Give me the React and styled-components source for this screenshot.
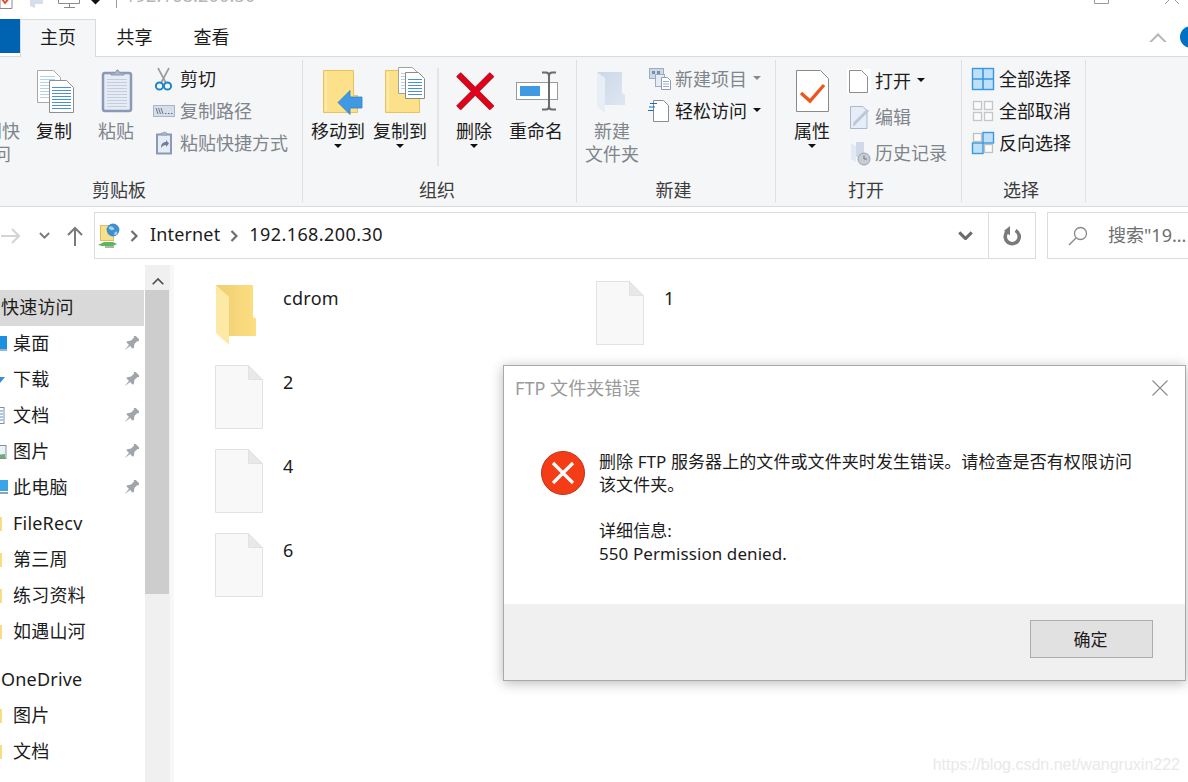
import React from 'react';
import styled, { createGlobalStyle } from 'styled-components';

const Global = createGlobalStyle`
  html, body { margin: 0; padding: 0; background: #fff; }
  body { font-family: "Noto Sans", "Noto Sans CJK SC", sans-serif; color: #1c1c1c; }
  * { box-sizing: border-box; }
`;

const Page = styled.div`
  position: relative; width: 1188px; height: 782px; overflow: hidden; background: #fff;
  font-size: 18px; line-height: 23px;
`;

/* ---------- title bar ---------- */
const TitleBar = styled.div`
  height: 19px; display: flex; align-items: flex-start; overflow: hidden; position: relative;
`;
const TitleText = styled.div`
  margin-left: 8px; margin-top: -16px; color: #b5b5b5; font-size: 18px; letter-spacing: 0.2px;
`;
const QuickSep = styled.div`
  width: 1px; height: 8px; background: #9a9a9a;
`;
const TitleSpacer = styled.div` flex: 1; `;

/* ---------- tabs ---------- */
const TabBar = styled.div`
  height: 38px; display: flex; align-items: stretch; border-bottom: 1px solid #dadbdc; background: #fff;
`;
const FileTab = styled.div`
  width: 20px; height: 34px; background: #0063b1;
`;
const Tab = styled.div`
  width: ${p => p.$w}px; display: flex; align-items: center; justify-content: center; height: 38px; padding-bottom: 2px;
  background: ${p => (p.$active ? '#f5f6f7' : 'transparent')};
  border: 1px solid ${p => (p.$active ? '#dadbdc' : 'transparent')};
  border-bottom: none;
`;
const TabSpacer = styled.div` flex: 1; `;
const Collapse = styled.div`
  width: 30px; display: flex; align-items: center; justify-content: center;
`;
const Help = styled.div`
  width: 22px; height: 22px; border-radius: 50%; background: #0072c6; margin: 7px -14px 0 7px; flex: none;
`;

/* ---------- ribbon ---------- */
const Ribbon = styled.div`
  height: 150px; background: #f5f6f7; border-bottom: 1px solid #dadbdc; padding-top: 3px; display: flex;
`;
const Group = styled.div`
  width: ${p => p.$w}px; height: 142px; flex: none; display: flex; flex-direction: column;
  margin-left: ${p => p.$ml || 0}px; border-right: 1px solid #dfe0e1;
`;
const GroupBody = styled.div`
  flex: 1; display: flex; align-items: flex-start; padding: 3px 0 0 ${p => p.$pl || 0}px; min-height: 0;
`;
const GroupLabel = styled.div`
  height: 24px; padding-right: ${p => p.$pr ?? 5}px; display: flex; align-items: center; justify-content: center; color: #3c3c3c;
`;
const BigButton = styled.div`
  width: ${p => p.$w || 62}px; flex: none; display: flex; flex-direction: column; align-items: center;
  padding-top: 3px; margin-left: ${p => p.$ml || 0}px;
  color: ${p => (p.$muted ? '#7f858b' : 'inherit')}; white-space: nowrap;
`;
const BigIcon = styled.div` width: 48px; height: 48px; `;
const BigLabel = styled.div` margin-top: 6px; text-align: center; white-space: pre-line; `;
const DropCaret = styled.div`
  width: 0; height: 0; margin-top: 1px;
  border-left: 4px solid transparent; border-right: 4px solid transparent; border-top: 4px solid #111;
`;
const InlineCaret = styled.div`
  width: 0; height: 0; margin-left: 6px; margin-bottom: 3px;
  border-left: 4px solid transparent; border-right: 4px solid transparent;
  border-top: 4px solid ${p => (p.$muted ? '#8a8a8a' : '#111')};
`;
const GroupDivider = styled.div`
  width: 2px; height: 98px; background: #e4e5e6; margin: 5px 4px 0 6px; flex: none;
`;
const SmallColumn = styled.div`
  display: flex; flex-direction: column; margin-left: ${p => p.$ml || 0}px;
`;
const SmallRow = styled.div`
  height: ${p => p.$h || 32}px; display: flex; align-items: center; white-space: nowrap;
  color: ${p => (p.$muted ? '#7f858b' : 'inherit')};
`;
const SmallIcon = styled.div`
  width: 24px; height: 24px; margin-right: 4px; flex: none;
`;

/* ---------- address row ---------- */
const AddressRow = styled.div`
  height: 58px; display: flex; align-items: flex-start; padding-top: 5px; background: #fff;
`;
const NavCluster = styled.div`
  width: 94px; height: 47px; flex: none; display: flex; align-items: center;
`;
const NavSlot = styled.div` margin-left: ${p => p.$ml || 0}px; `;
const AddressBox = styled.div`
  width: 942px; height: 47px; flex: none; border: 1.5px solid #dcdcdc; display: flex; align-items: center;
  padding-left: 2px;
`;
const Crumb = styled.div`
  margin-left: ${p => p.$ml || 0}px; margin-top: -2px; white-space: nowrap; letter-spacing: ${p => p.$ls}px;
`;
const CrumbFill = styled.div` flex: 1; `;
const DropZone = styled.div` width: 45px; display: flex; justify-content: center; `;
const Refresh = styled.div`
  width: 47px; height: 100%; border-left: 1.5px solid #dcdcdc; display: flex; align-items: center; justify-content: center;
`;
const SearchBox = styled.div`
  width: 160px; height: 47px; flex: none; margin-left: 11px; border: 1.5px solid #dcdcdc;
  display: flex; align-items: center; padding-left: 20px; color: #6f6f6f; white-space: nowrap;
`;
const SearchText = styled.div` margin-left: 20px; `;

/* ---------- main ---------- */
const Main = styled.div`
  height: 517px; display: flex;
`;
const Sidebar = styled.div`
  width: 145px; flex: none; padding-top: 25px;
`;
const NavItem = styled.div`
  height: 36px; display: flex; align-items: center; padding-right: 6px; margin-top: ${p => p.$mt || 0}px;
  background: ${p => (p.$active ? '#d9d9d9' : 'transparent')};
  padding-left: ${p => (p.$flat ? 1 : 0)}px; width: ${p => (p.$active ? 144 : 145)}px;
`;
const NavGlyph = styled.div` width: 13px; height: 18px; flex: none; `;
const NavLabel = styled.div` flex: 1; white-space: nowrap; padding-bottom: 2px; letter-spacing: 0.2px; `;
const ScrollTrack = styled.div`
  width: 29px; flex: none; background: #f0f0f0; border-right: 4px solid #f8f8f8; display: flex; flex-direction: column;
`;
const ScrollButton = styled.div`
  height: 25px; display: flex; align-items: flex-end; justify-content: center; padding-bottom: 5px; background: #f0f0f0;
`;
const ScrollThumb = styled.div` height: 304px; background: #cdcdcd; margin-right: 1px; `;
const FileArea = styled.div`
  flex: 1; padding: 16px 0 0 41px; display: grid; grid-template-columns: 381px 381px; grid-auto-rows: 84px; align-content: start;
`;
const FileItem = styled.div`
  display: flex; align-items: flex-start; grid-column: ${p => p.$col}; letter-spacing: 0.3px;
`;
const FileName = styled.div` margin-left: 20px; line-height: 34px; `;

/* ---------- dialog ---------- */
const Dialog = styled.div`
  position: absolute; left: 503px; top: 365px; width: 683px; height: 316px; background: #fff;
  border: 1px solid #a9a9a9; box-shadow: 0 2px 12px rgba(0,0,0,.28); display: flex; flex-direction: column;
  font-size: 17px;
`;
const DialogTitle = styled.div`
  height: 44px; flex: none; display: flex; align-items: center; justify-content: space-between;
  padding: 0 17px 0 11px; color: #9a9a9a; font-size: 18px; letter-spacing: 0.05px;
`;
const DialogBody = styled.div`
  flex: 1; display: flex; align-items: flex-start; padding: 40px 0 0 37px;
`;
const ErrorIcon = styled.div` width: 44px; height: 44px; margin-top: 1px; flex: none; `;
const Message = styled.div` margin-left: 14px; white-space: pre-line; letter-spacing: 0.08px; `;
const DialogFooter = styled.div`
  height: 76px; flex: none; background: #f0f0f0; display: flex; justify-content: flex-end; padding: 16px 32px 0 0;
`;
const OkButton = styled.div`
  width: 123px; height: 38px; background: #e1e1e1; border: 1px solid #adadad; display: flex; align-items: center; justify-content: center;
  padding-right: 2px;
`;
const Watermark = styled.div`
  position: absolute; right: 8px; top: 753px; font-family: "Liberation Sans", sans-serif; font-size: 16px;
  color: #e9e9e9; white-space: nowrap;
`;

/* ---------- icons ---------- */
const Page2 = ({ x, y, w, h, ear = 7, stroke = '#9a9a9a', fill = '#fff' }) => (
  <path d={`M${x} ${y}H${x + w - ear}L${x + w} ${y + ear}V${y + h}H${x}Z`} fill={fill} stroke={stroke} />
);
const Lines = ({ x, y, w, n, gap = 3, color = '#4a90d9' }) => (
  <g stroke={color} strokeWidth="1">
    {Array.from({ length: n }).map((_, i) => <path key={i} d={`M${x} ${y + i * gap + .5}h${w}`} />)}
  </g>
);
const Ico = ({ s = 48, h, children, ...r }) => (
  <svg width={s} height={h || s} viewBox={`0 0 ${s} ${h || s}`} style={{ display: 'block', overflow: 'visible' }} {...r}>{children}</svg>
);

const CopyIcon = () => (
  <Ico>
    <Page2 x={7.5} y={4.5} w={23} h={32} ear={7} stroke="#a9a9a9" />
    <Lines x={10} y={10} w={15} n={8} color="#b7cfe9" />
    <Page2 x={19.5} y={14.5} w={24} h={32} ear={7} stroke="#8f8f8f" />
    <Lines x={22} y={21} w={19} n={8} color="#4a90d9" />
  </Ico>
);
const PasteIcon = () => (
  <Ico>
    <rect x="11" y="7" width="28" height="38" rx="2" fill="#e6ebf4" stroke="#8a9ab6" strokeWidth="2.5" />
    <Lines x={15} y={13} w={20} n={10} gap={3} color="#c3cde0" />
    <path d="M19 9v-2h4l2-3h1l2 3h4v2z" fill="#a9b6cc" stroke="#8a9ab6" />
  </Ico>
);
const FolderBase = () => (
  <>
    <path d="M9.5 4.5H39.5V29.5H43.5V46.5H9.5Z" fill="#fde08a" stroke="#e6c35c" />
    <path d="M12 6V45" stroke="#ffeeb5" strokeWidth="1.5" />
  </>
);
const MoveIcon = () => (
  <Ico>
    <FolderBase />
    <path d="M24 36.5L36 24.5V31H48V42H36V48.5Z" fill="#3f9ae3" stroke="#2f7dbf" strokeWidth=".8" />
  </Ico>
);
const CopyToIcon = () => (
  <Ico>
    <FolderBase />
    <Page2 x={22.5} y={1.5} w={20} h={26} ear={6} stroke="#a3a3a3" />
    <Lines x={25} y={7} w={13} n={6} color="#b7cfe9" />
    <Page2 x={29.5} y={6.5} w={19} h={26} ear={6} stroke="#8b8b8b" />
    <Lines x={32} y={13} w={14} n={6} color="#4a90d9" />
  </Ico>
);
const DeleteIcon = () => (
  <Ico>
    <path d="M8.5 8.5L42 42M42 8.5L8.5 42" stroke="#9c2430" strokeWidth="6.6" />
    <path d="M8.5 8.5L42 42M42 8.5L8.5 42" stroke="#e2001a" strokeWidth="5" />
  </Ico>
);
const RenameIcon = () => (
  <Ico>
    <rect x="4.5" y="16.5" width="41" height="17" fill="#fff" stroke="#9a9a9a" />
    <rect x="8" y="20" width="20" height="10" fill="#3f9ae3" />
    <path d="M30 6.5H34C36 6.5 37 8 37 10V40C37 42 36 43.5 34 43.5H30M44 6.5H40C38 6.5 37 8 37 10M44 43.5H40C38 43.5 37 42 37 40" fill="none" stroke="#6b6b6b" strokeWidth="2" />
  </Ico>
);
const NewFolderIcon = () => (
  <Ico>
    <defs>
      <linearGradient id="nfb" x1="0" x2="1" y1="0" y2="1">
        <stop offset="0" stopColor="#cbd7e8" /><stop offset="1" stopColor="#dfe6f1" />
      </linearGradient>
    </defs>
    <path d="M9 6H34V27L37 29V39H17Z" fill="url(#nfb)" />
    <path d="M9 6L17 12V47L9 41Z" fill="#e8eef6" />
  </Ico>
);
const PropsIcon = () => (
  <Ico>
    <Page2 x={8.5} y={4.5} w={32} h={41} ear={8} stroke="#8a8a8a" />
    <path d="M13 27L22 35L36 19" fill="none" stroke="#e9591f" strokeWidth="3.4" />
  </Ico>
);

const Scissors = () => (
  <Ico s={24}>
    <path d="M6 1L14 16M17 1L9 16" stroke="#9b9b9b" strokeWidth="1.6" fill="none" />
    <circle cx="7.5" cy="19" r="3.6" fill="none" stroke="#1b87c9" strokeWidth="2" />
    <circle cx="15.5" cy="19" r="3.6" fill="none" stroke="#1b87c9" strokeWidth="2" />
  </Ico>
);
const CopyPath = () => (
  <Ico s={24}>
    <rect x="1.5" y="6.5" width="21" height="11" fill="#d6deea" stroke="#aab6c8" />
    <path d="M4 9l2 6M6.5 9l2 6M9 9l2 6" stroke="#5c6b80" strokeWidth=".9" />
    <path d="M13 14.5h1.4M16 14.5h1.4M19 14.5h1.4" stroke="#5c6b80" />
  </Ico>
);
const PasteShortcut = () => (
  <Ico s={24}>
    <rect x="5" y="3.5" width="14" height="19" fill="#e6ebf4" stroke="#8a9ab6" strokeWidth="2" />
    <path d="M9 4V2h2l1-1h1l1 1h1v2z" fill="#a9b6cc" stroke="#8a9ab6" strokeWidth=".7" />
    <path d="M9 17c0-4 2-6 5-6v-2l3 3.5-3 3.5v-2c-2 0-4 1-5 3z" fill="#6f7f96" />
  </Ico>
);
const NewItem = () => (
  <Ico s={24}>
    <rect x="2.5" y="1.5" width="14" height="10" fill="#cdd8e7" stroke="#9cadc3" />
    <rect x="5" y="4" width="3" height="3" fill="#7d8fa8" /><rect x="10" y="4" width="3" height="3" fill="#7d8fa8" />
    <rect x="8.5" y="7.5" width="9" height="12" fill="#e6ecf5" stroke="#9cadc3" />
    <Page2 x={14.5} y={10.5} w={9} h={12} ear={3} stroke="#8c9db5" />
    <Lines x={16} y={14} w={6} n={3} gap={2.5} color="#9cadc3" />
  </Ico>
);
const EasyAccess = () => (
  <Ico s={24}>
    <Page2 x={6.5} y={1.5} w={15} h={21} ear={5} stroke="#8d8d8d" />
    <path d="M3 4.5h7M2 8h6M1 11.5h6" stroke="#1173c4" strokeWidth="1.2" />
  </Ico>
);
const OpenIcon = () => (
  <Ico s={24}>
    <rect x="0" y="0" width="24" height="24" fill="#fff" />
    <Page2 x={2.5} y={1.5} w={18} h={22} ear={6} stroke="#8d8d8d" fill="#fff" />
  </Ico>
);
const EditIcon = () => (
  <Ico s={24}>
    <path d="M3.5 1.5H16L20 6V23.5H3.5Z" fill="#e6edf7" stroke="#aab9d0" />
    <path d="M7 19L21 5" stroke="#bcc8da" strokeWidth="3" />
    <path d="M7 19l-1 2 2-1z" fill="#8f9db3" />
  </Ico>
);
const HistoryIcon = () => (
  <Ico s={24}>
    <path d="M4 2L9 5V21L4 18Z" fill="#e3e9f2" />
    <path d="M9 1H17V16H9Z" fill="#cfd9e8" />
    <circle cx="17" cy="18" r="6" fill="#c6ccd4" stroke="#9aa2ac" />
    <path d="M17 14.5V18H20" stroke="#6d7580" fill="none" />
  </Ico>
);
const SelectAll = () => (
  <Ico s={24}>
    <rect x="1.5" y="1.5" width="21" height="21" fill="#bfe0fa" stroke="#3b97de" strokeWidth="1.4" />
    <path d="M12 1v22M1 12h22" stroke="#3b97de" strokeWidth="1.6" />
  </Ico>
);
const SelectNone = () => (
  <Ico s={24}>
    <g fill="#fafafa" stroke="#c6c6c6" strokeWidth="1.3">
      <rect x="2.5" y="2.5" width="8" height="8" /><rect x="13.5" y="2.5" width="8" height="8" />
      <rect x="2.5" y="13.5" width="8" height="8" /><rect x="13.5" y="13.5" width="8" height="8" />
    </g>
  </Ico>
);
const SelectInvert = () => (
  <Ico s={24}>
    <g fill="#fafafa" stroke="#c0c0c0" strokeWidth="1.3">
      <rect x="2.5" y="2.5" width="8" height="8" /><rect x="13.5" y="13.5" width="8" height="8" />
    </g>
    <g fill="#bfe0fa" stroke="#3b97de" strokeWidth="1.4">
      <rect x="12" y="1.5" width="10.5" height="10.5" /><rect x="1.5" y="12" width="10.5" height="10.5" />
    </g>
  </Ico>
);

const Arrow = ({ color, w = 20 }) => (
  <svg width={w} height="18" viewBox={`0 0 ${w} 18`} style={{ display: 'block' }}>
    <path d={`M1 9H${w - 1}M${w - 8} 2L${w - 1} 9L${w - 8} 16`} fill="none" stroke={color} strokeWidth="2" />
  </svg>
);
const UpArrow = () => (
  <svg width="18" height="20" viewBox="0 0 18 20" style={{ display: 'block' }}>
    <path d="M9 20V2M2 9L9 2L16 9" fill="none" stroke="#7a7a7a" strokeWidth="2" />
  </svg>
);
const ChevDown = ({ w = 12, color = '#6b6b6b', sw = 2.4 }) => (
  <svg width={w} height={w * .6} viewBox="0 0 12 7" style={{ display: 'block' }}>
    <path d="M1 1L6 6L11 1" fill="none" stroke={color} strokeWidth={sw} />
  </svg>
);
const ChevRight = ({ ml }) => (
  <svg width="8" height="12" viewBox="0 0 8 12" style={{ display: 'block', marginLeft: ml }}>
    <path d="M1.5 1L6.5 6L1.5 11" fill="none" stroke="#6e6e6e" strokeWidth="2.2" />
  </svg>
);
const NetFolder = () => (
  <svg width="24" height="26" viewBox="0 0 24 26" style={{ display: 'block', flex: 'none' }}>
    <rect x="3.5" y="2.5" width="13" height="15" fill="#fbe08c" stroke="#d9bd62" />
    <path d="M1 22l6-3h9l4 2-4 2H5z" fill="#5cb85c" />
    <path d="M8 24h9" stroke="#aeb4ae" strokeWidth="2" />
    <circle cx="16" cy="7" r="6.4" fill="#3f8fcf" />
    <path d="M12 4c2-2 4 0 5 1s-1 3-3 2-3-2-2-3zM18 9c2-1 3 0 2 2s-3 1-3 0z" fill="#9fd0ef" />
  </svg>
);
const RefreshIcon = () => (
  <svg width="18" height="20" viewBox="0 0 18 20" style={{ display: 'block' }}>
    <path d="M12.5 4.5A7 7 0 1 1 4 6" fill="none" stroke="#7a7a7a" strokeWidth="3.6" />
    <path d="M7 0V9.5L1 4.8Z" fill="#7a7a7a" />
  </svg>
);
const SearchIcon = () => (
  <svg width="20" height="20" viewBox="0 0 20 20" style={{ display: 'block' }}>
    <circle cx="12.5" cy="7.5" r="6" fill="none" stroke="#8a8a8a" strokeWidth="1.3" />
    <path d="M8 12L1 19" stroke="#8a8a8a" strokeWidth="1.5" />
  </svg>
);
const UpChevron = ({ w = 18, color = '#b5b5b5', sw = 2 }) => (
  <svg width={w} height={w * .55} viewBox="0 0 18 10" style={{ display: 'block' }}>
    <path d="M1 9.5L9 1.5L17 9.5" fill="none" stroke={color} strokeWidth={sw} />
  </svg>
);
const PinIcon = () => (
  <svg width="16" height="16" viewBox="0 0 16 16" style={{ display: 'block', flex: 'none' }}>
    <g transform="rotate(45 8 8) translate(0 -1)" fill="#9fa5aa">
      <path d="M4.5 0H11.5V1.6L10.4 2.2V6.4L12.6 9.6V11H3.4V9.6L5.6 6.4V2.2L4.5 1.6Z" />
      <path d="M7.2 11H8.8L8 18Z" />
    </g>
  </svg>
);
const NavClip = ({ kind }) => {
  const draw = {
    desktop: <><rect x="-4" y="1" width="11" height="13" fill="#1d8fe1" /><rect x="-4" y="14" width="11" height="2" fill="#9bb3c6" /></>,
    download: <path d="M-6 6H5L0 12Z" fill="#2f8fdc" />,
    doc: <><rect x="-6" y="0.5" width="10" height="16" fill="#fff" stroke="#8d8d8d" /><path d="M-5 4h8M-5 7h8M-5 10h8M-5 13h8" stroke="#4a90d9" /></>,
    pic: <><rect x="-6" y="2.5" width="12" height="13" fill="#e8f3f8" stroke="#8d8d8d" /><path d="M-6 12L5 11V15H-6Z" fill="#6cae7a" /></>,
    pc: <><rect x="-6" y="1" width="14" height="11" fill="#3aa4e8" /><path d="M-6 13H8V15H-6Z" fill="#8fa3b3" /></>,
    folder: <rect x="-4" y="2" width="6" height="14" fill="#fbdc83" />,
  }[kind];
  return <svg width="13" height="18" viewBox="0 0 13 18" style={{ display: 'block' }}>{draw}</svg>;
};

const FileIcon = () => (
  <svg width="48" height="64" viewBox="0 0 48 64" style={{ display: 'block', flex: 'none' }}>
    <path d="M.5 .5H33.5L47.5 14.5V63.5H.5Z" fill="#f8f8f9" stroke="#e2e2e2" />
    <path d="M33.5 .5V14.5H47.5Z" fill="#e8e8e8" stroke="#e2e2e2" />
  </svg>
);
const FolderIcon = () => (
  <svg width="48" height="64" viewBox="0 0 48 64" style={{ display: 'block', flex: 'none' }}>
    <defs>
      <linearGradient id="fb" x1="0" x2="1" y1="0" y2="0">
        <stop offset="0" stopColor="#f0cd72" /><stop offset="1" stopColor="#fcdf82" />
      </linearGradient>
    </defs>
    <path d="M1 4H38V36L41 37.5V55H14Z" fill="url(#fb)" />
    <path d="M1 4L14 16V64L1 52Z" fill="#fde9a6" />
  </svg>
);
const ErrorBadge = () => (
  <svg width="44" height="44" viewBox="0 0 44 44" style={{ display: 'block' }}>
    <circle cx="22" cy="22" r="21.5" fill="#f43d17" stroke="#b9341a" />
    <path d="M12 12L32 32M32 12L12 32" stroke="#fff" strokeWidth="3.2" />
  </svg>
);
const CloseX = ({ color = '#8c8c8c', s = 16 }) => (
  <svg width={s} height={s} viewBox="0 0 16 16" style={{ display: 'block' }}>
    <path d="M.5 .5L15.5 15.5M15.5 .5L.5 15.5" stroke={color} strokeWidth="1.1" />
  </svg>
);

/* title-bar icons, cut by the top of the picture */
const QuickIcons = () => (
  <svg width="116" height="19" viewBox="0 0 116 19" style={{ display: 'block', flex: 'none' }}>
    <path d="M0 -5H12V8.5H0Z" fill="#fff" stroke="#8a8a8a" />
    <path d="M2 -1L5 3L10 -3" fill="none" stroke="#e0562a" strokeWidth="2" />
    <path d="M30 -5H43V4H35V8L30 6Z" fill="#d5deeb" />
    <path d="M58.5 -5H79.5V3.5H58.5Z" fill="#fff" stroke="#8a8a8a" />
    <path d="M69.5 3V7M64 7.5H75" stroke="#8a8a8a" />
    <path d="M91 0H100L95.5 4.5Z" fill="#111" />
  </svg>
);
const MaxIcon = () => (
  <svg width="15" height="4" viewBox="0 0 15 4" style={{ display: 'block' }}>
    <path d="M.5 -6V3.5H14.5V-6" fill="none" stroke="#9a9a9a" />
  </svg>
);
const CloseCut = () => (
  <svg width="16" height="4" viewBox="0 0 16 4" style={{ display: 'block', marginLeft: 55, marginRight: 8 }}>
    <path d="M1 4L5 0M15 4L11 0" fill="none" stroke="#9a9a9a" />
  </svg>
);

const navRows = [
  { label: '桌面', kind: 'desktop', pin: true },
  { label: '下载', kind: 'download', pin: true },
  { label: '文档', kind: 'doc', pin: true },
  { label: '图片', kind: 'pic', pin: true },
  { label: '此电脑', kind: 'pc', pin: true },
  { label: 'FileRecv', kind: 'folder' },
  { label: '第三周', kind: 'folder' },
  { label: '练习资料', kind: 'folder' },
  { label: '如遇山河', kind: 'folder' },
];

const files = [
  { name: 'cdrom', col: 1, folder: true },
  { name: '1', col: 2 },
  { name: '2', col: 1 },
  { name: '4', col: 1 },
  { name: '6', col: 1 },
];

export default function App() {
  return (
    <Page>
      <Global />
      <TitleBar>
        <QuickIcons />
        <QuickSep />
        <TitleText>192.168.200.30</TitleText>
        <TitleSpacer />
        <MaxIcon />
        <CloseCut />
      </TitleBar>

      <TabBar>
        <FileTab />
        <Tab $w={76} $active>主页</Tab>
        <Tab $w={77}>共享</Tab>
        <Tab $w={77}>查看</Tab>
        <TabSpacer />
        <Collapse><UpChevron /></Collapse>
        <Help />
      </TabBar>

      <Ribbon>
        <Group $w={367} $ml={-64}>
          <GroupBody $pl={64}>
            <BigButton $w={72} $ml={-52} $muted>
              <BigIcon />
              <BigLabel>{'固定到快\n速访问'}</BigLabel>
            </BigButton>
            <BigButton $ml={3}><BigIcon><CopyIcon /></BigIcon><BigLabel>复制</BigLabel></BigButton>
            <BigButton $muted><BigIcon><PasteIcon /></BigIcon><BigLabel>粘贴</BigLabel></BigButton>
            <SmallColumn $ml={5}>
              <SmallRow><SmallIcon><Scissors /></SmallIcon>剪切</SmallRow>
              <SmallRow $muted><SmallIcon><CopyPath /></SmallIcon>复制路径</SmallRow>
              <SmallRow $muted><SmallIcon><PasteShortcut /></SmallIcon>粘贴快捷方式</SmallRow>
            </SmallColumn>
          </GroupBody>
          <GroupLabel $pr={0}>剪贴板</GroupLabel>
        </Group>

        <Group $w={274}>
          <GroupBody $pl={4}>
            <BigButton><BigIcon><MoveIcon /></BigIcon><BigLabel>移动到</BigLabel><DropCaret /></BigButton>
            <BigButton><BigIcon><CopyToIcon /></BigIcon><BigLabel>复制到</BigLabel><DropCaret /></BigButton>
            <GroupDivider />
            <BigButton><BigIcon><DeleteIcon /></BigIcon><BigLabel>删除</BigLabel><DropCaret /></BigButton>
            <BigButton><BigIcon><RenameIcon /></BigIcon><BigLabel>重命名</BigLabel></BigButton>
          </GroupBody>
          <GroupLabel>组织</GroupLabel>
        </Group>

        <Group $w={199}>
          <GroupBody $pl={4}>
            <BigButton $muted><BigIcon><NewFolderIcon /></BigIcon><BigLabel>{'新建\n文件夹'}</BigLabel></BigButton>
            <SmallColumn $ml={4}>
              <SmallRow $muted><SmallIcon><NewItem /></SmallIcon>新建项目<InlineCaret $muted /></SmallRow>
              <SmallRow><SmallIcon><EasyAccess /></SmallIcon>轻松访问<InlineCaret /></SmallRow>
            </SmallColumn>
          </GroupBody>
          <GroupLabel>新建</GroupLabel>
        </Group>

        <Group $w={186}>
          <GroupBody $pl={5}>
            <BigButton><BigIcon><PropsIcon /></BigIcon><BigLabel>属性</BigLabel><DropCaret /></BigButton>
            <SmallColumn $ml={4}>
              <SmallRow $h={36}><SmallIcon><OpenIcon /></SmallIcon>打开<InlineCaret /></SmallRow>
              <SmallRow $h={36} $muted><SmallIcon><EditIcon /></SmallIcon>编辑</SmallRow>
              <SmallRow $h={36} $muted><SmallIcon><HistoryIcon /></SmallIcon>历史记录</SmallRow>
            </SmallColumn>
          </GroupBody>
          <GroupLabel>打开</GroupLabel>
        </Group>

        <Group $w={124}>
          <GroupBody $pl={9}>
            <SmallColumn>
              <SmallRow><SmallIcon><SelectAll /></SmallIcon>全部选择</SmallRow>
              <SmallRow><SmallIcon><SelectNone /></SmallIcon>全部取消</SmallRow>
              <SmallRow><SmallIcon><SelectInvert /></SmallIcon>反向选择</SmallRow>
            </SmallColumn>
          </GroupBody>
          <GroupLabel>选择</GroupLabel>
        </Group>
      </Ribbon>

      <AddressRow>
        <NavCluster>
          <Arrow color="#d4d4d4" />
          <NavSlot $ml={19}><ChevDown w={11} color="#777" sw={2} /></NavSlot>
          <NavSlot $ml={16}><UpArrow /></NavSlot>
        </NavCluster>
        <AddressBox>
          <NetFolder />
          <ChevRight ml={9} />
          <Crumb $ml={12} $ls={0.15}>Internet</Crumb>
          <ChevRight ml={10} />
          <Crumb $ml={11} $ls={0.42}>192.168.200.30</Crumb>
          <CrumbFill />
          <DropZone><ChevDown w={15} /></DropZone>
          <Refresh><RefreshIcon /></Refresh>
        </AddressBox>
        <SearchBox>
          <SearchIcon />
          <SearchText>搜索"19...</SearchText>
        </SearchBox>
      </AddressRow>

      <Main>
        <Sidebar>
          <NavItem $active $flat><NavLabel>快速访问</NavLabel></NavItem>
          {navRows.map(r => (
            <NavItem key={r.label}>
              <NavGlyph><NavClip kind={r.kind} /></NavGlyph>
              <NavLabel>{r.label}</NavLabel>
              {r.pin && <PinIcon />}
            </NavItem>
          ))}
          <NavItem $mt={12} $flat><NavLabel>OneDrive</NavLabel></NavItem>
          <NavItem><NavGlyph><NavClip kind="folder" /></NavGlyph><NavLabel>图片</NavLabel></NavItem>
          <NavItem><NavGlyph><NavClip kind="folder" /></NavGlyph><NavLabel>文档</NavLabel></NavItem>
        </Sidebar>
        <ScrollTrack>
          <ScrollButton><UpChevron w={12} color="#505050" sw={2.6} /></ScrollButton>
          <ScrollThumb />
        </ScrollTrack>
        <FileArea>
          {files.map(f => (
            <FileItem key={f.name} $col={f.col}>
              {f.folder ? <FolderIcon /> : <FileIcon />}
              <FileName>{f.name}</FileName>
            </FileItem>
          ))}
        </FileArea>
      </Main>

      <Dialog>
        <DialogTitle>FTP 文件夹错误<CloseX /></DialogTitle>
        <DialogBody>
          <ErrorIcon><ErrorBadge /></ErrorIcon>
          <Message>{'删除 FTP 服务器上的文件或文件夹时发生错误。请检查是否有权限访问\n该文件夹。\n\n详细信息:\n550 Permission denied.'}</Message>
        </DialogBody>
        <DialogFooter><OkButton>确定</OkButton></DialogFooter>
      </Dialog>

      <Watermark>https://blog.csdn.net/wangruxin222</Watermark>
    </Page>
  );
}
